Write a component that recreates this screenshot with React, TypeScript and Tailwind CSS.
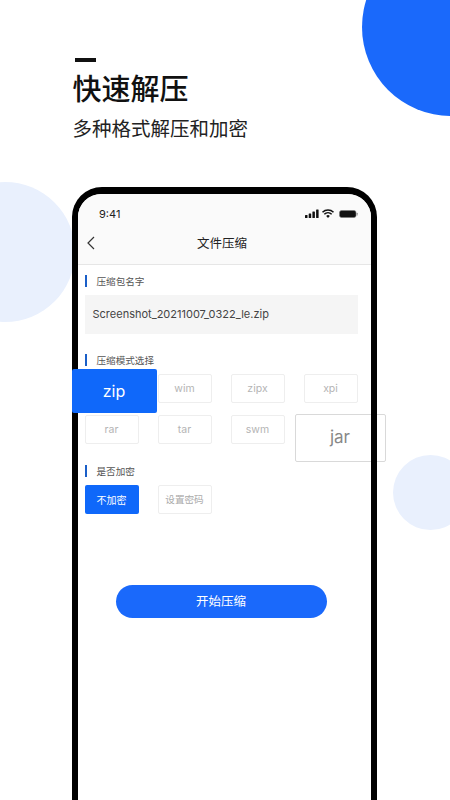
const cjk = 'font-["Noto_Sans_CJK_SC",sans-serif]'
const latin = 'font-["Inter","Noto_Sans_CJK_SC",sans-serif]'

function SectionLabel({ text, className }: { text: string; className: string }) {
  return (
    <div className={`flex items-center gap-[9.5px] ${className}`}>
      <span className="h-[12px] w-[2.5px] bg-[#1a5fc8]" />
      <span className={`text-[9.6px] leading-[12px] text-[#555555] ${cjk}`}>{text}</span>
    </div>
  )
}

function Tile({ label }: { label: string }) {
  return (
    <div className={`flex h-[29px] w-[54px] items-center justify-center rounded-[2px] border border-[#eeeeee] text-[10.5px] text-[#b4b4b4] ${latin}`}>
      {label}
    </div>
  )
}

function StatusIcons() {
  return (
    <svg width="53" height="10" viewBox="0 0 53 10">
      <rect x="0" y="6" width="2.5" height="3" rx="0.5" fill="#111" />
      <rect x="3.7" y="4.5" width="2.5" height="4.5" rx="0.5" fill="#111" />
      <rect x="7.4" y="2.5" width="2.5" height="6.5" rx="0.5" fill="#111" />
      <rect x="11.1" y="0.5" width="2.5" height="8.5" rx="0.5" fill="#111" />
      <path d="M17.5 3.2a8 8 0 0 1 11 0M19.3 5.2a5.4 5.4 0 0 1 7.4 0" fill="none" stroke="#111" strokeWidth="1.5" />
      <path d="M21.2 6.9a2.6 2.6 0 0 1 3.6 0L23 9z" fill="#111" />
      <rect x="34.5" y="1.5" width="16.5" height="7" rx="2" fill="#111" stroke="#777" strokeWidth="0.6" />
      <rect x="51.6" y="3.8" width="1" height="2.6" rx="0.5" fill="#888" />
    </svg>
  )
}

export default function App() {
  return (
    <div className="relative h-[800px] w-[450px] overflow-hidden bg-white">
      {/* background circles */}
      <div className="absolute left-[362px] top-[-62px] h-[178px] w-[178px] rounded-full bg-[#1a69fb]" />
      <div className="absolute left-[-65px] top-[182px] h-[140px] w-[140px] rounded-full bg-[#e9f0fd]" />
      <div className="absolute left-[393px] top-[455px] h-[75px] w-[75px] rounded-full bg-[#e9f0fd]" />

      <div className="relative pl-[72.5px] pt-[58px]">
        <div className="ml-[2.5px] h-[4px] w-[21px] bg-[#111111]" />
        <h1 className={`mt-[8px] text-[29px] font-medium leading-[34px] text-[#111111] ${cjk}`}>快速解压</h1>
        <p className={`mt-[10px] text-[19.5px] leading-[28px] text-[#222222] ${cjk}`}>多种格式解压和加密</p>
      </div>

      {/* phone */}
      <div className="relative ml-[72px] mt-[45px] h-[640px] w-[305px] rounded-t-[30px] border-x-[6.5px] border-t-[7px] border-black bg-white">
        <div className="h-[71px] rounded-t-[23px] border-b border-[#e6e6e6] bg-[#fafafa]">
          <div className="flex items-center justify-between pl-[21px] pr-[13px] pt-[13px]">
            <span className={`text-[11px] leading-[14px] text-[#222222] ${latin}`}>9:41</span>
            <StatusIcons />
          </div>
          <div className="relative mt-[13px] flex items-center justify-center pr-[5px]">
            <svg className="absolute left-[9px]" width="8" height="14" viewBox="0 0 8 14">
              <path d="M7 1L1 7l6 6" fill="none" stroke="#333" strokeWidth="1.2" />
            </svg>
            <span className={`text-[12.5px] leading-[18px] text-[#222222] ${cjk}`}>文件压缩</span>
          </div>
        </div>

        <div className="px-[6.5px]">
          <SectionLabel text="压缩包名字" className="mt-[10px]" />
          <div className={`mt-[8px] flex h-[39px] w-[273px] items-center bg-[#f5f5f5] pl-[8px] text-[11px] text-[#444444] ${latin}`}>
            Screenshot_20211007_0322_le.zip
          </div>

          <SectionLabel text="压缩模式选择" className="mt-[20px]" />
          <div className="mt-[8px] grid w-[273px] grid-cols-[54px_54px_54px_54px] gap-x-[19px] gap-y-[12px]">
            <div className="relative h-[29px]">
              <div className={`absolute left-[-13px] top-[-5px] z-10 flex h-[44px] w-[85px] items-center justify-center rounded-[2px] bg-[#0f68fa] text-[16px] text-white ${latin}`}>
                zip
              </div>
            </div>
            <Tile label="wim" />
            <Tile label="zipx" />
            <Tile label="xpi" />
            <Tile label="rar" />
            <Tile label="tar" />
            <Tile label="swm" />
            <div className="relative h-[29px]">
              <div className={`absolute left-[-9px] top-[-1px] z-10 flex h-[48px] w-[91px] items-center justify-center rounded-[2px] border border-black/15 text-[17px] text-[#888888] ${latin}`}>
                jar
              </div>
            </div>
          </div>

          <SectionLabel text="是否加密" className="mt-[21px]" />
          <div className="mt-[8px] flex gap-[19px]">
            <div className={`flex h-[29px] w-[54px] items-center justify-center rounded-[2px] bg-[#0f68fa] text-[10px] text-white ${cjk}`}>不加密</div>
            <div className={`flex h-[29px] w-[54px] items-center justify-center rounded-[2px] border border-[#eeeeee] text-[9.6px] text-[#aaaaaa] ${cjk}`}>设置密码</div>
          </div>

          <button className={`ml-[31px] mt-[71px] block h-[33px] w-[211px] rounded-full bg-[#1a69fb] text-[12.5px] text-white ${cjk}`}>
            开始压缩
          </button>
        </div>
      </div>
    </div>
  )
}
